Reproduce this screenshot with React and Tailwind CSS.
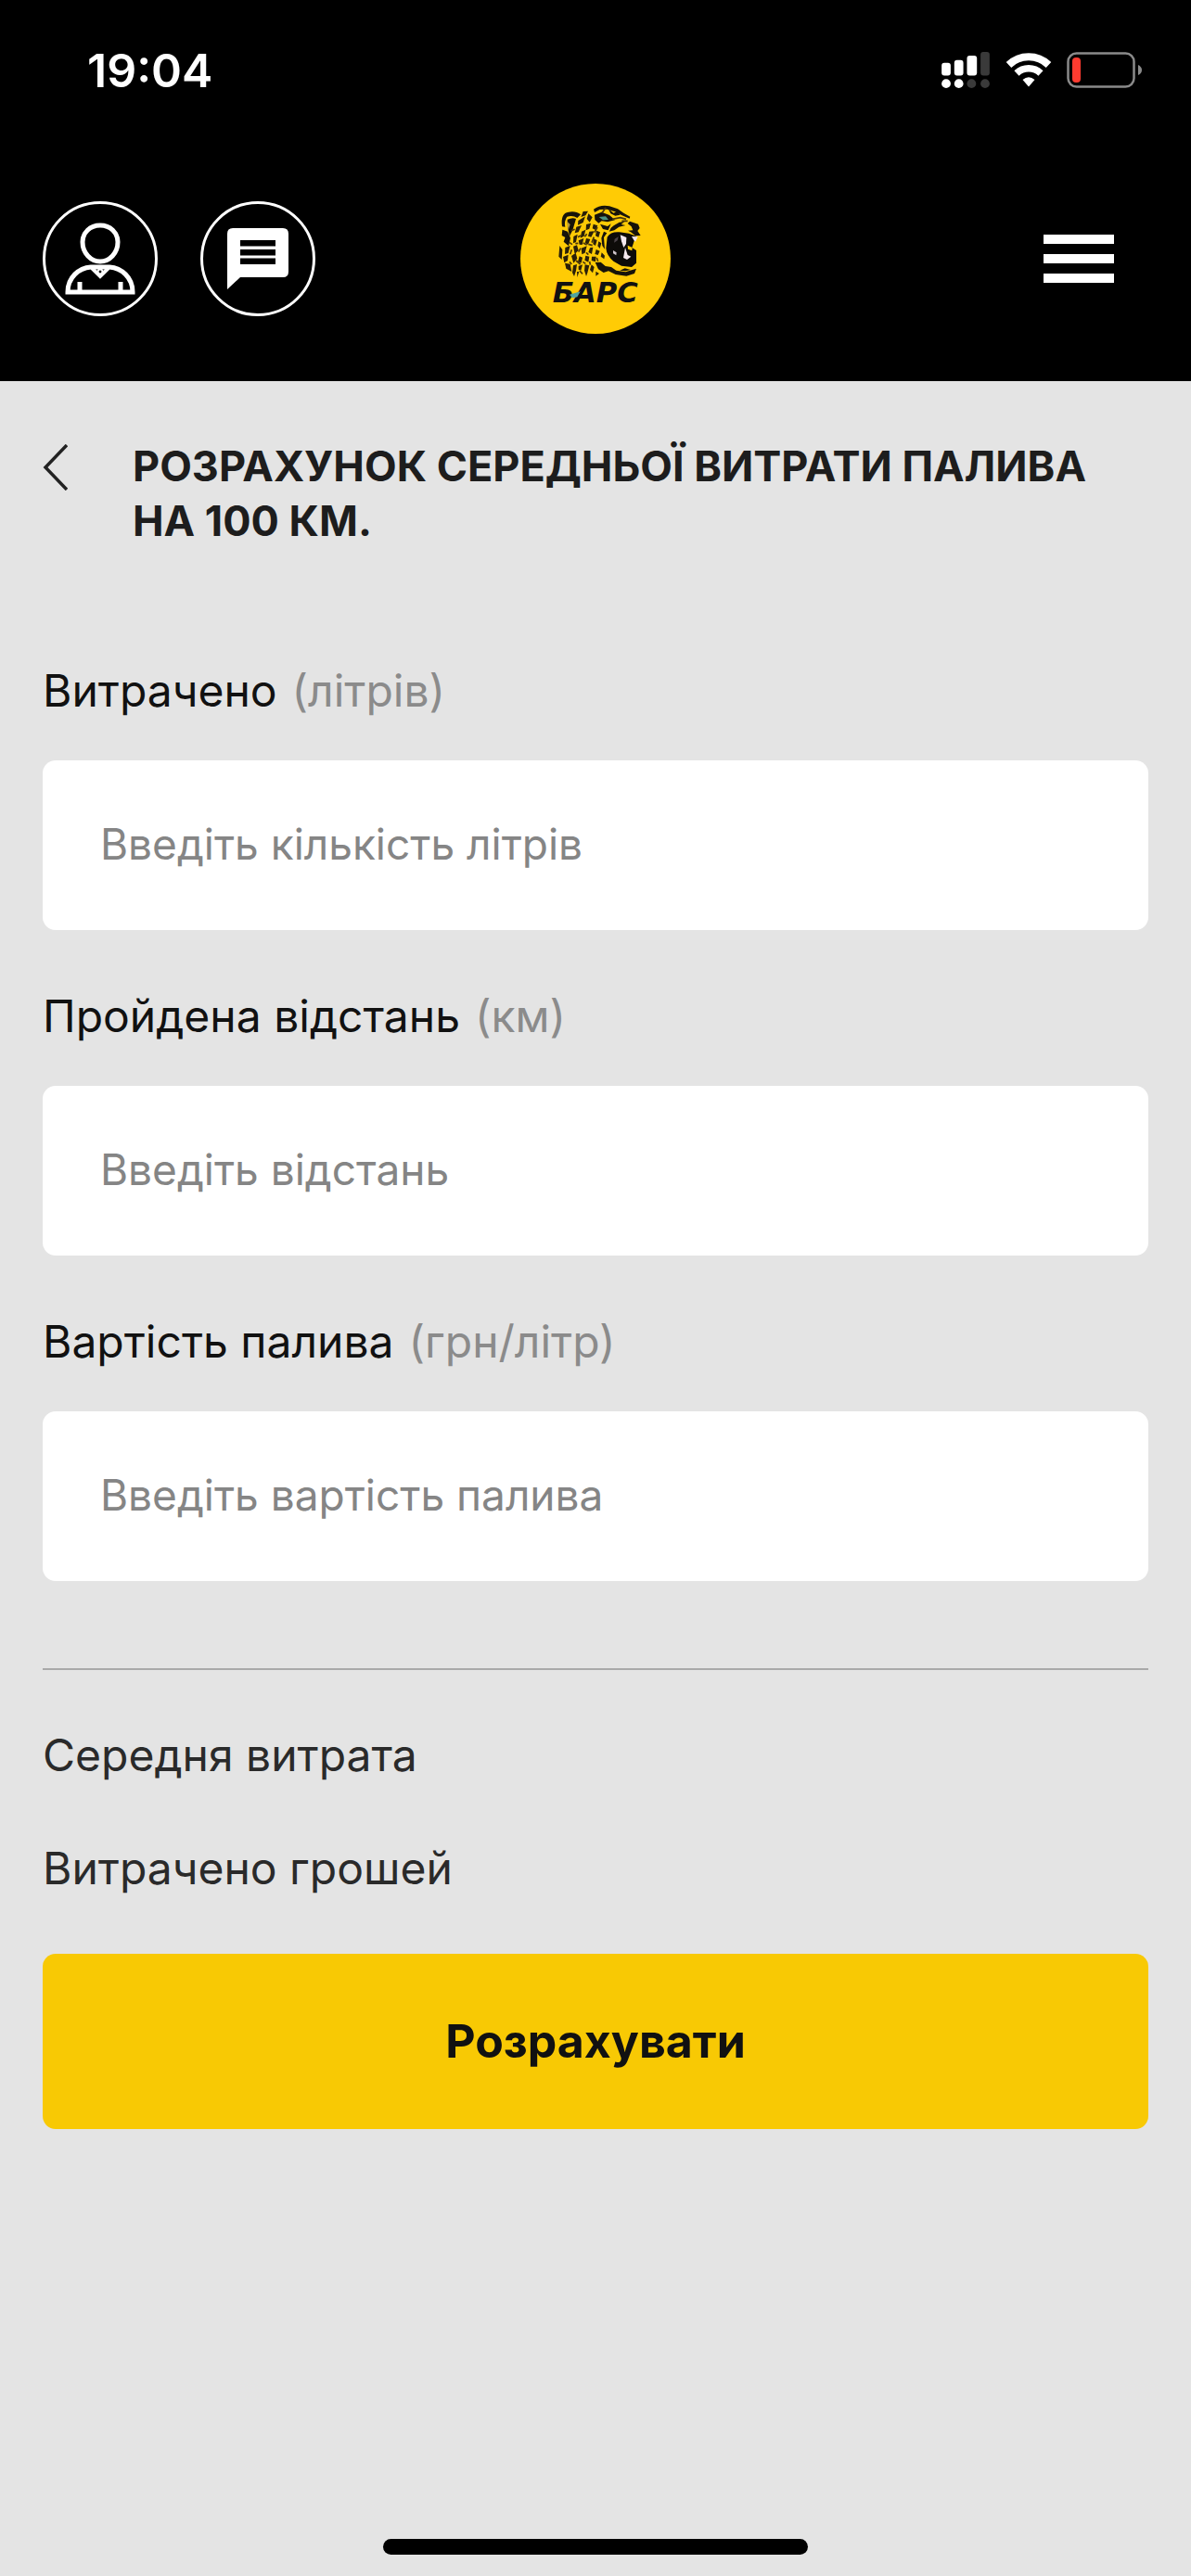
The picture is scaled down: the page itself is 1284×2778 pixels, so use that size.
import { useState } from "react";

const FIELDS = [
  {
    id: "liters",
    label: "Витрачено",
    unit: "(літрів)",
    placeholder: "Введіть кількість літрів",
  },
  {
    id: "distance",
    label: "Пройдена відстань",
    unit: "(км)",
    placeholder: "Введіть відстань",
  },
  {
    id: "price",
    label: "Вартість палива",
    unit: "(грн/літр)",
    placeholder: "Введіть вартість палива",
  },
];

function SignalIcon() {
  return (
    <svg width="53" height="41" viewBox="0 0 54 42" fill="#fff">
      <rect x="0" y="12" width="10" height="14" rx="3" />
      <rect x="14" y="9" width="10" height="17" rx="3" />
      <rect x="28" y="4" width="11" height="22" rx="3" />
      <rect x="43" y="0" width="10" height="26" rx="3" fill="#3a3a3a" />
      <circle cx="5" cy="35" r="5" />
      <circle cx="19" cy="35" r="5" />
      <circle cx="33" cy="35" r="5" fill="#3a3a3a" />
      <circle cx="48" cy="35" r="5" fill="#3a3a3a" />
    </svg>
  );
}

function WifiIcon() {
  return (
    <svg width="50" height="38" viewBox="0 0 50 38" fill="none" stroke="#fff">
      <path d="M3.500 13A31 31 0 0 1 46.500 13" strokeWidth="8" />
      <path d="M12 22A19 19 0 0 1 38 22" strokeWidth="7.500" />
      <path d="M18.500 29Q25 23.500 31.500 29L25 36.500Z" fill="#fff" stroke="none" />
    </svg>
  );
}

function BatteryIcon() {
  return (
    <svg width="82" height="40" viewBox="0 0 82 40" fill="none">
      <rect x="1.500" y="1.500" width="71" height="36" rx="9" stroke="#8a8a8a" strokeWidth="2.500" />
      <rect x="6" y="6" width="9" height="27" rx="4" fill="#ff3b30" />
      <path d="M77 14Q81 16 81 19.500T77 25Z" fill="#8a8a8a" />
    </svg>
  );
}

function UserIcon() {
  return (
    <svg width="76" height="78" viewBox="0 0 76 78" fill="none" stroke="#fff" strokeWidth="5">
      <path d="M38 3C49 3 57 11 57 21C57 33 48 42 38 42C28 42 19 33 19 21C19 11 27 3 38 3Z" />
      <path d="M3 75H73C73 59 61 49 48 48H28C15 49 3 59 3 75Z" />
      <path d="M29 49L38 58L47 49" strokeWidth="4" />
      <circle cx="38" cy="53" r="2.500" strokeWidth="2" />
      <path d="M16 64V74M60 64V74" />
    </svg>
  );
}

function ChatIcon() {
  return (
    <svg width="66" height="66" viewBox="0 0 66 66">
      <path d="M6 0H60Q66 0 66 6V47Q66 53 60 53H14L0 66V6Q0 0 6 0Z" fill="#fff" />
      <path d="M14 13H52V19.500H14ZM14 23H52V29.500H14ZM14 32.500H52V39H14Z" fill="#000" />
    </svg>
  );
}

function LeopardLogo() {
  return (
    <svg width="162" height="162" viewBox="63 56 486 486">
      <circle cx="306" cy="299" r="243" fill="#ffcb05" />

      {/* ear and back of the head */}
      <path
        d="M198 195Q192 151 219 148Q243 144 258 156L247 167Q233 158 214 163Q204 177 208 196Z"
        fill="#17130a"
      />
      <path d="M215 172Q232 164 243 170L232 207L222 226L216 197Z" fill="#17130a" />
      <path d="M214 178L224 188L218 207Z" fill="#b59a3c" />
      <path d="M199 205L216 211L225 232L219 258L203 244L208 230L197 224Z" fill="#17130a" />

      {/* brow, eye and muzzle */}
      <path
        d="M300 139Q322 123 351 129L378 138L397 151L418 163L416 169L390 158L369 147L344 139L320 140L303 149Z"
        fill="#17130a"
      />
      <path d="M303 157L326 148L351 158L369 174L345 180L326 177L316 184L304 173Z" fill="#17130a" />
      <path d="M317 164L339 162L348 173L330 174Z" fill="#4d9382" />
      <path d="M321 187L345 194L356 186L347 207L330 203Z" fill="#17130a" />
      <path d="M347 137L364 151L375 147L386 157L370 160L355 153Z" fill="#17130a" />
      <path
        d="M417 178L444 187L449 200L442 209L452 224L435 225L420 213L411 208L427 207L422 195L410 185Z"
        fill="#17130a"
      />
      <path
        d="M365 192L383 181L400 179L389 188L403 191L382 196L367 207L350 211L356 199Z"
        fill="#17130a"
      />

      {/* open jaws */}
      <path
        d="M344 229Q355 211 383 213L414 217L439 227L432 239L424 263L438 272L438 313L423 326L390 322L364 307Q342 288 340 265Z"
        fill="#0d0b09"
      />
      <path d="M386 222L406 230L405 251L397 263L390 243Z" fill="#f4e8ef" />
      <path d="M423 227L443 228L435 244L430 239Z" fill="#f4e8ef" />
      <path d="M396 296L402 263L410 287L421 292L408 302Z" fill="#f4e8ef" />
      <path d="M363 272L374 279L373 288L363 282Z" fill="#cfc5cb" />
      <path d="M368 235L380 228L377 240L366 247Z" fill="#4b4348" />
      <path d="M410 256L425 263L424 273L411 268Z" fill="#ffcb05" />
      <path
        d="M305 311L323 310L338 323L357 326L373 337L403 342L438 331L432 347L406 355L371 350L348 339L332 344L315 333Z"
        fill="#17130a"
      />
      <path d="M385 337L401 330L420 335L402 339Z" fill="#17130a" />
      <path d="M333 211L343 216L333 230L336 268L328 257L325 232Z" fill="#17130a" />

      {/* coat spots */}
      <path
        d="M266 146L282 145L274 159L259 164ZM283 153L296 165L287 181L278 170ZM250 176L273 162L266 182L249 190ZM276 188L291 184L286 202L275 207ZM299 187L313 192L306 206L296 201ZM244 196L261 191L251 213L239 216ZM261 211L274 205L269 226L257 232ZM286 211L302 210L292 229L282 226ZM309 208L321 213L316 230L306 225ZM235 227L248 220L243 245L234 249ZM251 240L268 233L263 254L254 253ZM276 233L289 236L282 253L272 248ZM299 234L311 239L306 257L298 252ZM316 243L325 249L320 266L313 258ZM190 257L199 270L197 302L187 292ZM208 263L224 257L218 281L207 284ZM234 259L246 255L251 272L239 284ZM260 265L278 258L272 280L262 285ZM288 264L298 262L294 284L283 278ZM308 269L320 274L314 287L304 284ZM201 293L218 286L216 305L205 312ZM228 290L242 280L247 298L235 313ZM254 291L264 295L260 313L249 309ZM274 289L286 292L283 310L271 304ZM294 292L308 292L306 309L293 305ZM326 279L336 289L334 300L323 292ZM207 313L224 316L229 341L211 331ZM234 321L246 317L243 338L237 356L231 344ZM251 323L264 318L259 337L251 334ZM272 318L286 321L280 345L276 356L270 337ZM293 318L302 326L297 345L288 335ZM246 341L253 341L247 359ZM307 340L318 347L307 355Z"
        fill="#2a2009"
      />
      <path
        d="M227 208L239 204M249 229L258 224M271 228L278 219M294 247L301 229M221 246L231 253M229 270L224 285M251 277L258 265M283 286L276 279M222 309L229 317M243 305L257 317M265 309L274 315M287 308L289 319M255 338L264 348M303 214L312 197M327 151L339 134M360 171L386 166L405 171M391 177L410 177M314 307L310 296M283 252L296 256M266 248L278 254M241 250L250 249"
        stroke="#4a370a"
        strokeWidth="5"
        fill="none"
      />

      <text
        x="305"
        y="440"
        textAnchor="middle"
        className="font-['DejaVu_Sans',sans-serif] text-[92px] font-bold italic"
        fill="#111"
      >
        БАРС
      </text>
      <path d="M222 415L257 405L247 423L231 426Z" fill="#4da3a0" />
    </svg>
  );
}

function StatusBar() {
  return (
    <div className="flex h-[152px] items-center justify-between pr-[52px] pl-[94px]">
      <span className="text-[50px] font-semibold text-white">19:04</span>

      <div className="flex items-center gap-4">
        <SignalIcon />
        <WifiIcon />
        <BatteryIcon />
      </div>
    </div>
  );
}

function Header() {
  return (
    <header className="bg-black">
      <StatusBar />

      <nav className="grid grid-cols-[1fr_auto_1fr] items-center px-[46px] pt-[46px] pb-[51px]">
        <div className="flex gap-[46px]">
          <button
            type="button"
            aria-label="Профіль"
            className="flex size-[124px] items-center justify-center rounded-full border-3 border-white"
          >
            <UserIcon />
          </button>
          <button
            type="button"
            aria-label="Повідомлення"
            className="flex size-[124px] items-center justify-center rounded-full border-3 border-white"
          >
            <ChatIcon />
          </button>
        </div>

        <a href="#" aria-label="Барс">
          <LeopardLogo />
        </a>

        <button
          type="button"
          aria-label="Меню"
          className="mr-[37px] flex w-[76px] flex-col gap-[11px] justify-self-end"
        >
          <span className="h-[10px] w-full bg-white" />
          <span className="h-[10px] w-full bg-white" />
          <span className="h-[10px] w-full bg-white" />
        </button>
      </nav>
    </header>
  );
}

function Field({ id, label, unit, placeholder, value, onChange }) {
  return (
    <div className="flex flex-col gap-[45px]">
      <label htmlFor={id} className="flex gap-4 text-[48px] leading-[60px] text-[#111]">
        {label}
        <span className="text-[#8b8b8b]">{unit}</span>
      </label>
      <input
        id={id}
        inputMode="decimal"
        placeholder={placeholder}
        value={value}
        onChange={(e) => onChange(id, e.target.value)}
        className="h-[183px] w-full rounded-[14px] bg-white px-[62px] pb-1 text-[46px] text-[#111] outline-none placeholder:text-[#858585]"
      />
    </div>
  );
}

function App() {
  const [values, setValues] = useState({ liters: "", distance: "", price: "" });
  const [result, setResult] = useState(null);

  const handleChange = (id, value) => {
    setValues({ ...values, [id]: value });
  };

  const handleSubmit = (e) => {
    e.preventDefault();

    const liters = Number(values.liters);
    const distance = Number(values.distance);
    const price = Number(values.price);

    if (!liters || !distance) return;

    setResult({
      average: ((liters / distance) * 100).toFixed(2),
      money: (liters * price).toFixed(2),
    });
  };

  return (
    <div className="flex min-h-screen flex-col bg-[#e4e4e4] font-['Inter',sans-serif]">
      <Header />

      <main className="px-[46px] pt-[62px]">
        <div className="flex items-start gap-[70px] pr-[46px]">
          <a href="#" aria-label="Назад" className="pt-[6px]">
            <svg width="27" height="50" viewBox="0 0 27 50" fill="none" stroke="#222" strokeWidth="3.500">
              <path d="M26 1L3 25L26 49" />
            </svg>
          </a>
          <h1 className="text-[45px] leading-[59px] font-bold text-[#1d1d1d] uppercase">
            Розрахунок середньої витрати палива на 100 км.
          </h1>
        </div>

        <form onSubmit={handleSubmit} className="mt-[124px]">
          <div className="flex flex-col gap-[63px]">
            {FIELDS.map((field) => (
              <Field
                key={field.id}
                {...field}
                value={values[field.id]}
                onChange={handleChange}
              />
            ))}
          </div>

          <hr className="mt-[94px] border-t-2 border-[#a9a9a9]" />

          <div className="flex flex-col gap-[62px] py-[62px] text-[48px] leading-[60px] text-[#2a2a2a]">
            <p className="flex justify-between">
              Середня витрата
              {result && <span>{result.average}</span>}
            </p>
            <p className="flex justify-between">
              Витрачено грошей
              {result && <span>{result.money}</span>}
            </p>
          </div>

          <button
            type="submit"
            className="h-[189px] w-full rounded-[14px] bg-[#f8c904] text-[50px] font-bold text-[#111]"
          >
            Розрахувати
          </button>
        </form>
      </main>

      <div className="mt-auto flex justify-center pb-[23px]">
        <div className="h-[17px] w-[458px] rounded-full bg-black" />
      </div>
    </div>
  );
}

export default App;
